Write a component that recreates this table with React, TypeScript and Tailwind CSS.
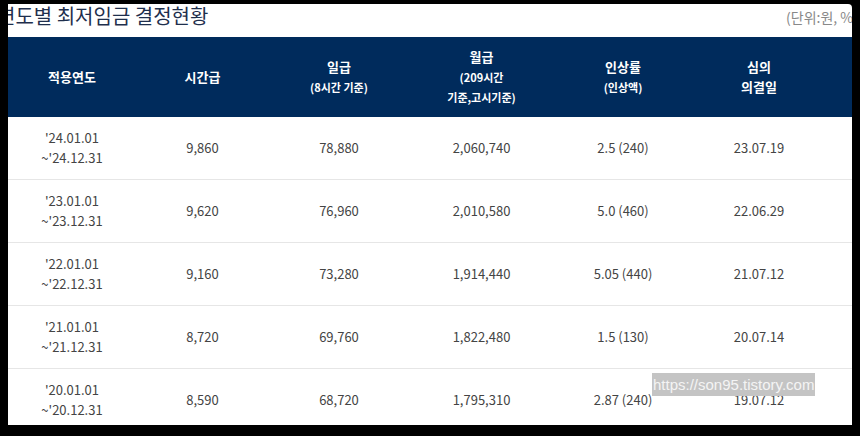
import React from 'react';

type Row = {
  from: string;
  to: string;
  hour: string;
  day: string;
  month: string;
  rate: string;
  decided: string;
};

const rows: Row[] = [
  { from: "'24.01.01", to: "~'24.12.31", hour: '9,860', day: '78,880', month: '2,060,740', rate: '2.5 (240)', decided: '23.07.19' },
  { from: "'23.01.01", to: "~'23.12.31", hour: '9,620', day: '76,960', month: '2,010,580', rate: '5.0 (460)', decided: '22.06.29' },
  { from: "'22.01.01", to: "~'22.12.31", hour: '9,160', day: '73,280', month: '1,914,440', rate: '5.05 (440)', decided: '21.07.12' },
  { from: "'21.01.01", to: "~'21.12.31", hour: '8,720', day: '69,760', month: '1,822,480', rate: '1.5 (130)', decided: '20.07.14' },
  { from: "'20.01.01", to: "~'20.12.31", hour: '8,590', day: '68,720', month: '1,795,310', rate: '2.87 (240)', decided: '19.07.12' },
];

const cols = 'grid grid-cols-[128px_133px_140px_145px_138px_134px_1fr]';

const App = () => {
  return (
    <div className="w-[860px] h-[436px] bg-black pt-[4px] pl-[8px] pr-[8px] pb-[11px] font-['Noto_Sans_CJK_KR','Noto_Sans',sans-serif]">
      <div className="relative h-full bg-white overflow-hidden rounded-tr-[4px]">
        {/* title row */}
        <div className="flex justify-between h-[33px]">
          <h2 className="-ml-[11px] text-[20px] leading-[24px] text-[#1f2f4d] whitespace-nowrap">
            연도별 최저임금 결정현황
          </h2>
          <span className="-mr-[6px] mt-[3px] text-[14px] leading-[20px] text-[#888888] whitespace-nowrap">
            (단위:원, %)
          </span>
        </div>

        {/* header */}
        <div className={`${cols} h-[80px] bg-[#002b5c] text-white font-bold items-center text-center`}>
          <div className="text-[13px] leading-[20px]">적용연도</div>
          <div className="text-[13px] leading-[20px]">시간급</div>
          <div className="flex flex-col items-center">
            <span className="text-[13px] leading-[20px]">일급</span>
            <span className="text-[11px] leading-[20px]">(8시간 기준)</span>
          </div>
          <div className="flex flex-col items-center">
            <span className="text-[13px] leading-[20px]">월급</span>
            <span className="text-[11px] leading-[20px]">(209시간</span>
            <span className="text-[11px] leading-[20px]">기준,고시기준)</span>
          </div>
          <div className="flex flex-col items-center">
            <span className="text-[13px] leading-[20px]">인상률</span>
            <span className="text-[11px] leading-[20px]">(인상액)</span>
          </div>
          <div className="flex flex-col items-center">
            <span className="text-[13px] leading-[20px]">심의</span>
            <span className="text-[13px] leading-[20px]">의결일</span>
          </div>
          <div />
        </div>

        {/* body */}
        {rows.map((row) => (
          <div
            key={row.from}
            className={`${cols} h-[63px] border-b border-[#e6e6e6] items-center text-center text-[13px] leading-[20px] text-[#444444]`}
          >
            <div className="flex flex-col items-center">
              <span>{row.from}</span>
              <span>{row.to}</span>
            </div>
            <div>{row.hour}</div>
            <div>{row.day}</div>
            <div>{row.month}</div>
            <div>{row.rate}</div>
            <div>{row.decided}</div>
            <div />
          </div>
        ))}

        {/* watermark */}
        <div className="absolute left-[644px] top-[369px] h-[23px] px-[1px] bg-[#c4c4c4] text-[#f4f4f4] text-[15px] leading-[23px] font-['Liberation_Sans',sans-serif] whitespace-nowrap">
          https://son95.tistory.com
        </div>
      </div>
    </div>
  );
};

export default App;
